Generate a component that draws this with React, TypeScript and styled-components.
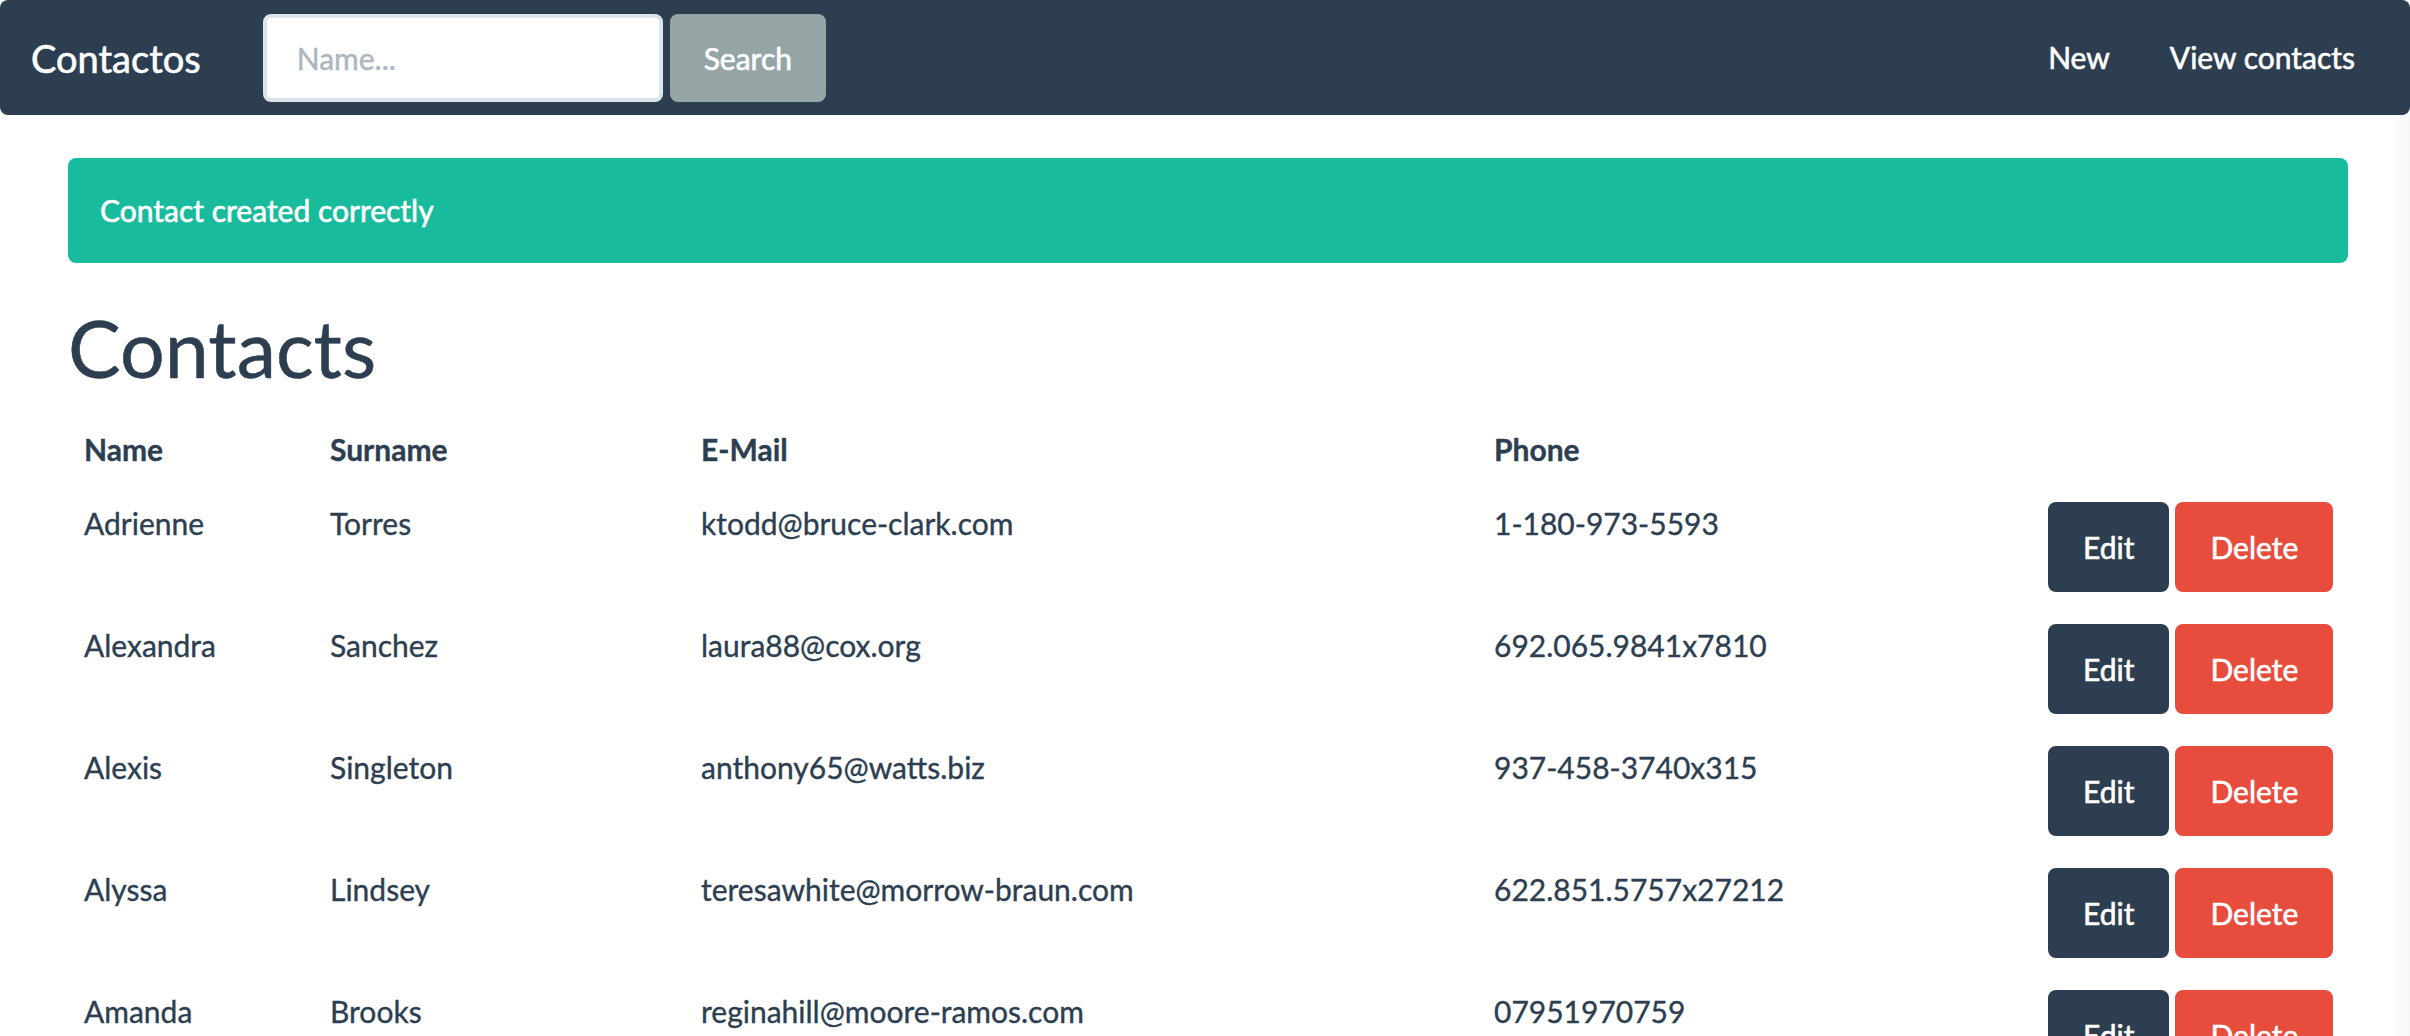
import React from "react";
import styled, { createGlobalStyle } from "styled-components";

const GlobalStyle = createGlobalStyle`
  html, body {
    margin: 0;
    padding: 0;
    background: #ffffff;
  }
  body {
    font-family: "Lato", "Liberation Sans", sans-serif;
    font-size: 30px;
    line-height: 1.428571;
    color: #2c3e50;
    -webkit-text-stroke: 0.35px currentColor;
    -webkit-font-smoothing: antialiased;
  }
  * { box-sizing: border-box; }
`;

const Page = styled.div`
  position: relative;
  min-height: 1036px;
`;

const ScrollTrack = styled.div`
  position: fixed;
  top: 115px;
  right: 0;
  bottom: 0;
  width: 16px;
  background: linear-gradient(to right, #fdfdfd, #f7f7f7);
  z-index: 0;
`;

const Navbar = styled.nav`
  display: flex;
  align-items: center;
  height: 115px;
  padding: 0 25px 0 31px;
  background: #2c3e50;
  border-radius: 8px;
  margin-bottom: 43px;
  position: relative;
  z-index: 1;
`;

const Brand = styled.a`
  font-size: 38px;
  line-height: 1;
  color: #ffffff;
  text-decoration: none;
  margin-right: 62px;
  -webkit-text-stroke: 0.6px #ffffff;
`;

const SearchForm = styled.form`
  display: flex;
  align-items: center;
  gap: 7px;
  margin: 0;
`;

const SearchInput = styled.input`
  width: 400px;
  height: 88px;
  padding: 0 30px;
  border: 4px solid #dce4ec;
  border-radius: 8px;
  background: #ffffff;
  font-family: "Lato", "Liberation Sans", sans-serif;
  font-size: 30px;
  color: #2c3e50;
  outline: none;
  -webkit-text-stroke: 0.4px currentColor;
  &::placeholder {
    color: #acb6c0;
  }
`;

type Variant = "default" | "primary" | "danger";
const fill = (v: Variant) => (v === "default" ? "#95a5a6" : v === "primary" ? "#2c3e50" : "#e74c3c");

const Button = styled.button<{ $variant: Variant; $h: number; $px: number }>`
  display: inline-flex;
  align-items: center;
  justify-content: center;
  height: ${(p) => p.$h}px;
  padding: 0 ${(p) => p.$px}px;
  border: 2px solid ${(p) => fill(p.$variant)};
  border-radius: 8px;
  background: ${(p) => fill(p.$variant)};
  color: #ffffff;
  font-family: "Lato", "Liberation Sans", sans-serif;
  font-size: 30px;
  line-height: 1;
  cursor: pointer;
  -webkit-text-stroke: 0.6px #ffffff;
`;

const Spacer = styled.div`
  flex: 1;
`;

const NavList = styled.ul`
  display: flex;
  list-style: none;
  margin: 0;
  padding: 0;
`;

const NavLink = styled.a`
  display: block;
  padding: 0 30px;
  color: #ffffff;
  text-decoration: none;
  font-size: 30px;
  line-height: 42.86px;
  -webkit-text-stroke: 0.6px #ffffff;
`;

const Container = styled.main`
  width: 2280px;
  margin-left: 68px;
  position: relative;
  z-index: 1;
`;

const Alert = styled.div`
  padding: 29px 30px;
  border: 2px solid #18bc9c;
  border-radius: 8px;
  background: #18bc9c;
  color: #ffffff;
  margin-bottom: 42px;
  -webkit-text-stroke: 0.6px #ffffff;
`;

const Title = styled.h1`
  font-size: 79px;
  line-height: 1.086;
  font-weight: 400;
  margin: 42px 0 21px;
  color: #2c3e50;
  -webkit-text-stroke: 0.5px #2c3e50;
`;

const Table = styled.table`
  width: 2280px;
  border-collapse: collapse;
  table-layout: fixed;
`;

const Th = styled.th<{ $w: number }>`
  width: ${(p) => p.$w}px;
  padding: 16px;
  text-align: left;
  font-weight: 700;
  vertical-align: bottom;
  line-height: 42.86px;
`;

const Td = styled.td`
  padding: 16px;
  vertical-align: top;
  line-height: 42.86px;
  white-space: nowrap;
`;

const Actions = styled.div`
  display: flex;
  gap: 6px;
`;

const contacts = [
  { name: "Adrienne", surname: "Torres", email: "ktodd@bruce-clark.com", phone: "1-180-973-5593" },
  { name: "Alexandra", surname: "Sanchez", email: "laura88@cox.org", phone: "692.065.9841x7810" },
  { name: "Alexis", surname: "Singleton", email: "anthony65@watts.biz", phone: "937-458-3740x315" },
  { name: "Alyssa", surname: "Lindsey", email: "teresawhite@morrow-braun.com", phone: "622.851.5757x27212" },
  { name: "Amanda", surname: "Brooks", email: "reginahill@moore-ramos.com", phone: "07951970759" },
];

export default function App() {
  return (
    <Page>
      <GlobalStyle />
      <ScrollTrack />
      <Navbar>
        <Brand href="#">Contactos</Brand>
        <SearchForm onSubmit={(e) => e.preventDefault()}>
          <SearchInput type="text" placeholder="Name..." />
          <Button type="submit" $variant="default" $h={88} $px={32}>
            Search
          </Button>
        </SearchForm>
        <Spacer />
        <NavList>
          <li>
            <NavLink href="#">New</NavLink>
          </li>
          <li>
            <NavLink href="#">View contacts</NavLink>
          </li>
        </NavList>
      </Navbar>
      <Container>
        <Alert>Contact created correctly</Alert>
        <Title>Contacts</Title>
        <Table>
          <thead>
            <tr>
              <Th $w={246}>Name</Th>
              <Th $w={371}>Surname</Th>
              <Th $w={793}>E-Mail</Th>
              <Th $w={554}>Phone</Th>
              <Th $w={316}></Th>
            </tr>
          </thead>
          <tbody>
            {contacts.map((c) => (
              <tr key={c.email}>
                <Td>{c.name}</Td>
                <Td>{c.surname}</Td>
                <Td>{c.email}</Td>
                <Td>{c.phone}</Td>
                <Td>
                  <Actions>
                    <Button $variant="primary" $h={90} $px={33}>
                      Edit
                    </Button>
                    <Button $variant="danger" $h={90} $px={33}>
                      Delete
                    </Button>
                  </Actions>
                </Td>
              </tr>
            ))}
          </tbody>
        </Table>
      </Container>
    </Page>
  );
}
